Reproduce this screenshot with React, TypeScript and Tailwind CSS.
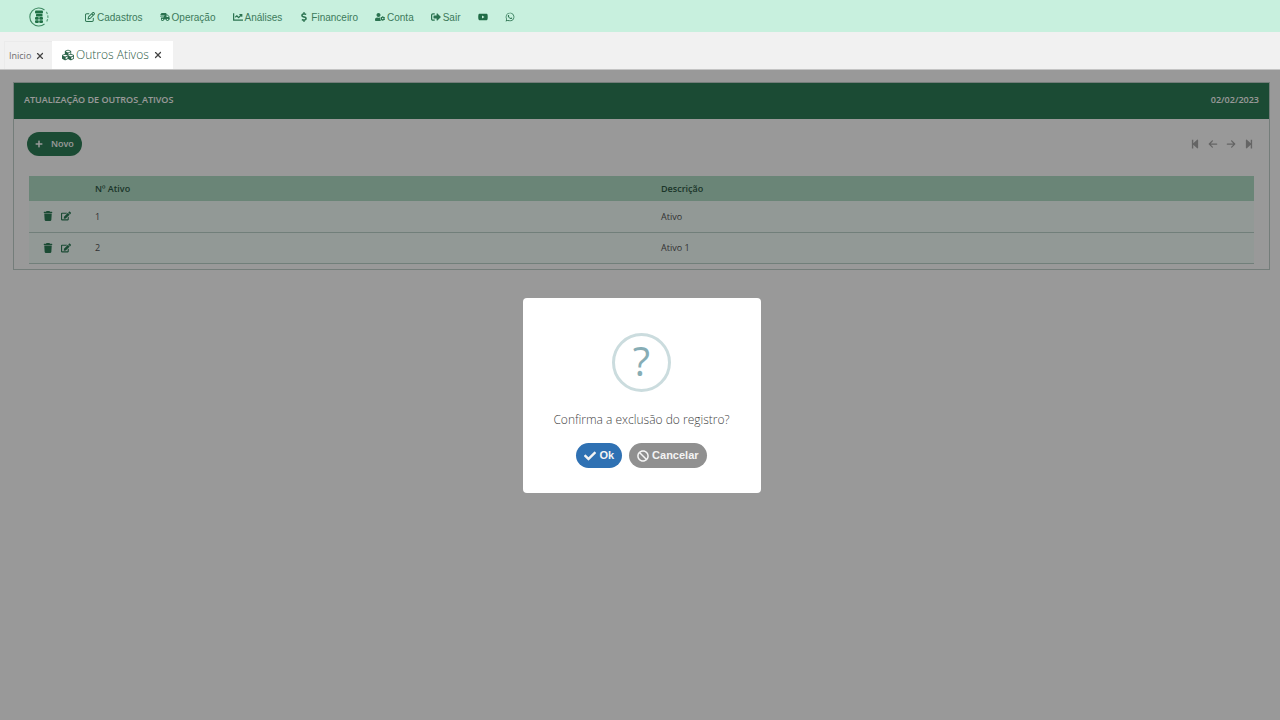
import { useState } from "react"
import {
  FaBan,
  FaChartLine,
  FaCheck,
  FaCubes,
  FaDollarSign,
  FaEdit,
  FaPlus,
  FaShippingFast,
  FaSignOutAlt,
  FaStepBackward,
  FaStepForward,
  FaUserCog,
  FaWhatsapp,
  FaYoutube,
} from "react-icons/fa"
import { FaArrowLeft, FaArrowRight, FaRegPenToSquare, FaTrash, FaXmark } from "react-icons/fa6"

interface Ativo {
  id: number
  descricao: string
}

const menuItems = [
  { label: "Cadastros", icon: FaRegPenToSquare },
  { label: "Operação", icon: FaShippingFast },
  { label: "Análises", icon: FaChartLine },
  { label: "Financeiro", icon: FaDollarSign },
  { label: "Conta", icon: FaUserCog },
  { label: "Sair", icon: FaSignOutAlt },
]

const pagerItems = [
  { label: "Primeiro", icon: FaStepBackward },
  { label: "Anterior", icon: FaArrowLeft },
  { label: "Próximo", icon: FaArrowRight },
  { label: "Último", icon: FaStepForward },
]

const initialAtivos: Ativo[] = [
  { id: 1, descricao: "Ativo" },
  { id: 2, descricao: "Ativo 1" },
]

function Logo() {
  return (
    <svg viewBox="0 0 20 20" className="h-5 w-5" fill="none" aria-hidden="true">
      <path d="M15.5 3A9 9 0 1 0 15.5 17" stroke="#3f8a63" strokeWidth="1.1" />
      <path d="M17.3 4.9A9 9 0 0 1 17.5 14.8" stroke="#5b9f7c" strokeWidth="1.2" strokeDasharray="2.5 1.2" />
      <g fill="#1f7045">
        <rect x="6" y="3.5" width="8" height="3" rx="1" />
        <rect x="7" y="7" width="6.5" height="2.5" rx="0.5" />
        <rect x="6" y="10" width="3.8" height="2.8" rx="1" />
        <rect x="10.2" y="10" width="3.8" height="2.8" rx="1" />
        <rect x="6" y="13.3" width="3.8" height="2.8" rx="1" />
        <rect x="10.2" y="13.3" width="3.8" height="2.8" rx="1" />
      </g>
    </svg>
  )
}

export default function App() {
  const [ativos, setAtivos] = useState<Ativo[]>(initialAtivos)
  const [selected, setSelected] = useState<Ativo | null>(initialAtivos[0])

  const confirmDelete = () => {
    setAtivos(ativos.filter((ativo) => ativo.id !== selected?.id))
    setSelected(null)
  }

  return (
    <div className="flex min-h-screen flex-col bg-white font-['Open_Sans',sans-serif]">
      <header className="flex h-8 items-center bg-[#c8f0de] pt-0.5 pl-[29px] font-['Liberation_Sans',sans-serif] text-[10px] text-[#3c7a5b]">
        <a href="#" aria-label="Página inicial" className="mr-9">
          <Logo />
        </a>
        <nav className="flex items-center gap-[17px]">
          {menuItems.map(({ label, icon: Icon }) => (
            <a key={label} href="#" className="flex items-center gap-0.5">
              <Icon className="h-2.5 w-auto text-[#2b7350]" />
              {label}
            </a>
          ))}
          <a href="#" aria-label="YouTube">
            <FaYoutube className="h-2.5 w-auto text-[#1f6b45]" />
          </a>
          <a href="#" aria-label="WhatsApp">
            <FaWhatsapp className="h-2.5 w-auto text-[#2b7350]" />
          </a>
        </nav>
      </header>

      <div className="flex h-[38px] items-end border-b border-[#c4c4c4] bg-[#f1f1f1] pl-1">
        <div className="flex h-7 w-12 items-center gap-1 border-t border-l border-[#ebebeb] pl-1 text-[9px] text-[#6b6b6b]">
          <a href="#">Inicio</a>
          <button type="button" aria-label="Fechar Inicio">
            <FaXmark className="h-2.5 w-auto text-[#444]" />
          </button>
        </div>
        <div className="flex h-7 items-center gap-0.5 bg-white px-2.5 text-xs font-light text-[#2f5d48]">
          <FaCubes className="h-3 w-auto text-[#2b6349]" />
          <a href="#">Outros Ativos</a>
          <button type="button" aria-label="Fechar Outros Ativos" className="pl-0.5">
            <FaXmark className="h-2.5 w-auto text-[#444]" />
          </button>
        </div>
      </div>

      <main className="relative flex-1 pt-3 pr-2.5 pl-[13px]">
        <section className="border border-[#c2d0cb]">
          <div className="flex h-9 items-center justify-between bg-[#2e7d57] px-2.5 pb-0.5 text-[9px] font-semibold text-white">
            <h1>ATUALIZAÇÃO DE OUTROS_ATIVOS</h1>
            <span>02/02/2023</span>
          </div>
          <div className="px-[15px] pb-[5px]">
            <div className="flex h-[57px] items-center justify-between pb-2">
              <button type="button" className="-ml-0.5 flex h-6 items-center gap-2 rounded-full bg-[#2e7d57] px-2 text-[9px] font-semibold text-white">
                <FaPlus className="h-2 w-auto" />
                Novo
              </button>
              <div className="flex gap-2 text-[10px] text-[#a8a8a8]">
                {pagerItems.map(({ label, icon: Icon }) => (
                  <button key={label} type="button" aria-label={label}>
                    <Icon />
                  </button>
                ))}
              </div>
            </div>
            <table className="w-full table-fixed text-left text-[9px] text-[#555]">
              <thead className="bg-[#b1dec6] text-[#2f5a46]">
                <tr className="h-[25px]">
                  <th className="w-[66px]" aria-label="Ações"></th>
                  <th className="w-[566px] font-semibold">Nº Ativo</th>
                  <th className="font-semibold">Descrição</th>
                </tr>
              </thead>
              <tbody>
                {ativos.map((ativo) => (
                  <tr key={ativo.id} className="h-[31px] border-b border-[#bcd4cb] bg-[#f3fffb]">
                    <td>
                      <div className="flex items-center gap-2 pl-3.5 text-[#2e7d57]">
                        <button type="button" aria-label="Excluir" onClick={() => setSelected(ativo)}>
                          <FaTrash className="h-2.5 w-auto" />
                        </button>
                        <button type="button" aria-label="Editar">
                          <FaEdit className="h-2.5 w-auto" />
                        </button>
                      </div>
                    </td>
                    <td>{ativo.id}</td>
                    <td>{ativo.descricao}</td>
                  </tr>
                ))}
              </tbody>
            </table>
          </div>
        </section>
        {selected && <div className="absolute inset-0 bg-black/40"></div>}
      </main>

      {selected && (
        <div className="fixed inset-0 flex items-center justify-center pt-[71px] pl-[3px]">
          <div role="dialog" aria-modal="true" aria-labelledby="confirm-text" className="flex w-[238px] flex-col items-center rounded-sm bg-white pt-[35px] pb-[25px]">
            <div className="flex h-[59px] w-[59px] items-center justify-center rounded-full border-3 border-[#cbdcde] pb-1 text-[40px] leading-none text-[#87adb5]">
              ?
            </div>
            <p id="confirm-text" className="mt-4 text-xs leading-6 font-light text-[#444]">
              Confirma a exclusão do registro?
            </p>
            <div className="mt-[11px] flex gap-[7px] font-['Liberation_Sans',sans-serif] text-[11px] font-bold text-[#f4f4f4]">
              <button type="button" onClick={confirmDelete} className="flex h-[25px] items-center gap-[3px] rounded-full bg-[#2f71b3] px-2">
                <FaCheck className="h-3 w-auto" />
                Ok
              </button>
              <button type="button" onClick={() => setSelected(null)} className="flex h-[25px] items-center gap-[3px] rounded-full bg-[#909090] px-2">
                <FaBan className="h-3 w-auto" />
                Cancelar
              </button>
            </div>
          </div>
        </div>
      )}
    </div>
  )
}
